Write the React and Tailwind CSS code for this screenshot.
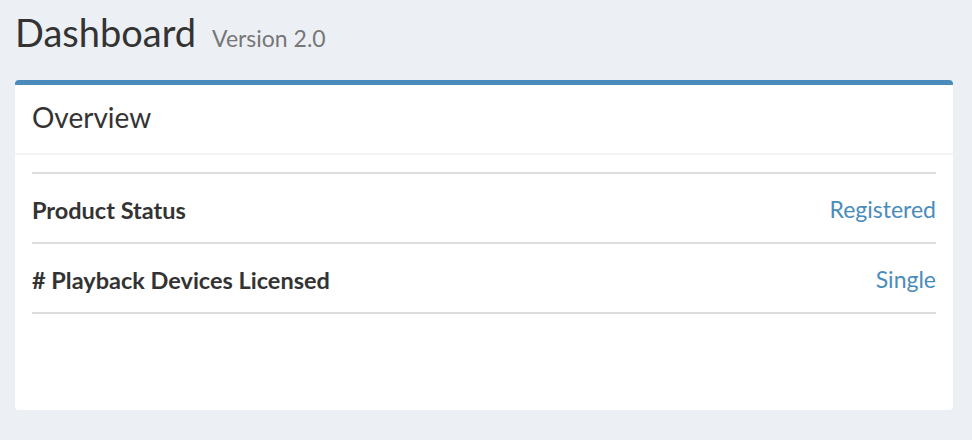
export default function App() {
  const rows = [
    { label: 'Product Status', value: 'Registered' },
    { label: '# Playback Devices Licensed', value: 'Single' },
  ]

  return (
    <div className="h-[440px] w-full bg-[#ecf0f5] font-['Lato',sans-serif] text-[#333]">
      {/* Page header */}
      <div className="flex items-baseline gap-[16px] px-[15px] pt-[10px] leading-[1.2]">
        <h1 className="text-[38px]">Dashboard</h1>
        <span className="text-[23px] text-[#777]">Version 2.0</span>
      </div>

      {/* Overview box */}
      <div className="ml-[15px] mt-[24px] h-[330px] w-[938px] rounded-[4px] border-t-[5px] border-[#4a8bbb] bg-white">
        <div className="h-[70px] border-b-2 border-[#f4f4f4] px-[17px] pt-[16px]">
          <h3 className="text-[28px] leading-[1.2]">Overview</h3>
        </div>
        <div className="px-[17px] pt-[17px]">
          <div className="border-t-2 border-[#ddd]">
            {rows.map((r) => (
              <div key={r.label} className="flex h-[70px] items-center justify-between border-b-2 border-[#ddd] pt-[4px] leading-[1.2]">
                <span className="text-[23.5px] font-bold">{r.label}</span>
                <span className="text-[23px] text-[#4a8cbc]">{r.value}</span>
              </div>
            ))}
          </div>
        </div>
      </div>
    </div>
  )
}
